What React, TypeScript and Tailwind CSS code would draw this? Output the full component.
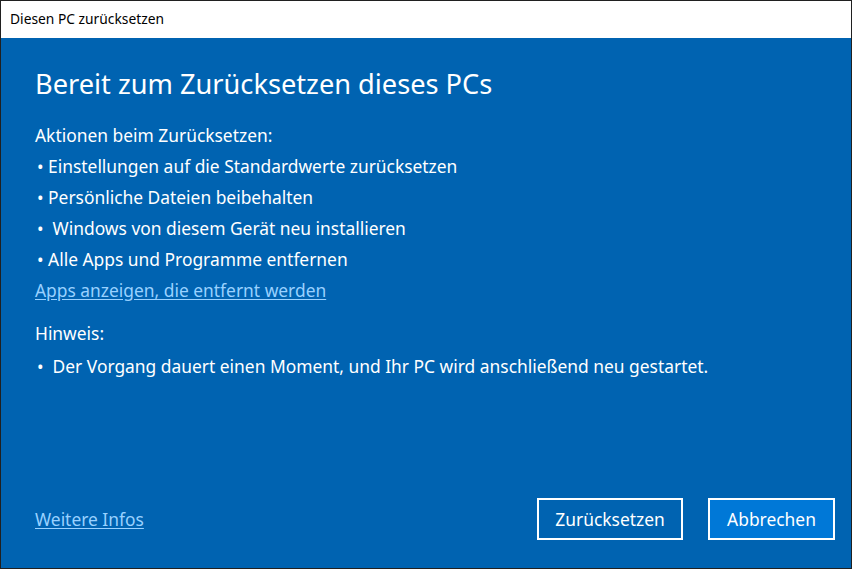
export default function App() {
  const actions = [
    "Einstellungen auf die Standardwerte zurücksetzen",
    "Persönliche Dateien beibehalten",
    " Windows von diesem Gerät neu installieren",
    "Alle Apps und Programme entfernen",
  ];

  return (
    <div
      className="w-[852px] h-[569px] flex flex-col border border-[#202020] bg-[#0063b1] text-white"
      style={{ fontFamily: "'Segoe UI', 'Noto Sans', sans-serif" }}
    >
      <div className="h-[37px] bg-white text-black text-[13.8px] flex items-center pl-[9px]">
        Diesen PC zurücksetzen
      </div>

      <div className="flex-1 flex flex-col pl-[34px] pr-[16px] pt-[28px] pb-[28px]">
        <h1 className="text-[27.2px] leading-[36px] font-normal">
          Bereit zum Zurücksetzen dieses PCs
        </h1>

        <div className="mt-[18px] text-[17.4px] leading-[31px]">
          <p>Aktionen beim Zurücksetzen:</p>
          {actions.map((a, i) => (
            <p key={i} className="whitespace-pre pl-[2px]">
              {"• " + a}
            </p>
          ))}
          <a href="#" className="text-[#99d1ff] underline underline-offset-2">
            Apps anzeigen, die entfernt werden
          </a>
        </div>

        <div className="mt-[11px] text-[17.4px] leading-[33px]">
          <p>Hinweis:</p>
          <p className="whitespace-pre pl-[2px]">{"•  Der Vorgang dauert einen Moment, und Ihr PC wird anschließend neu gestartet."}</p>
        </div>

        <div className="mt-auto flex items-center">
          <a href="#" className="text-[17.4px] text-[#99d1ff] underline underline-offset-2">
            Weitere Infos
          </a>
          <div className="ml-auto flex gap-[25px]">
            <button className="w-[146px] h-[42px] border-2 border-white text-[17.4px]">
              Zurücksetzen
            </button>
            <button className="w-[127px] h-[42px] border-2 border-white bg-[#0078d7] text-[17.4px]">
              Abbrechen
            </button>
          </div>
        </div>
      </div>
    </div>
  );
}
